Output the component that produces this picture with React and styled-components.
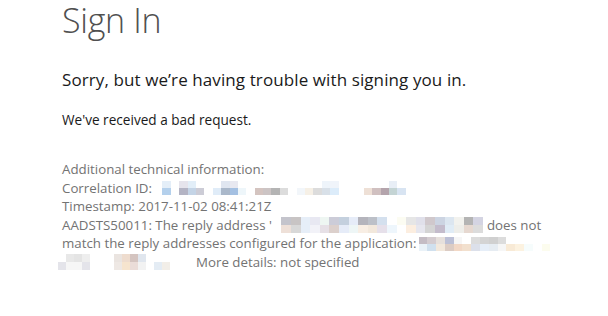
import React from 'react';
import styled, { createGlobalStyle } from 'styled-components';

const GlobalStyle = createGlobalStyle`
  html, body {
    margin: 0;
    padding: 0;
    background: #fff;
  }
  body {
    font-family: "Open Sans", "Noto Sans", sans-serif;
  }
`;

const Page = styled.div`
  padding: 0 0 0 62px;
  width: 608px;
  height: 316px;
  box-sizing: border-box;
  overflow: hidden;
`;

const Title = styled.h1`
  margin: 0;
  font-weight: 300;
  font-size: 34px;
  line-height: 40px;
  color: #505050;
  letter-spacing: -0.3px;
`;

const Lead = styled.p`
  margin: 28px 0 0;
  font-size: 17px;
  line-height: 24px;
  color: #1a1a1a;
  letter-spacing: 0.1px;
`;

const Message = styled.p`
  margin: 19px 0 0;
  font-size: 13.6px;
  line-height: 18px;
  color: #1a1a1a;
`;

const Details = styled.div`
  margin-top: 31px;
  font-size: 13.3px;
  line-height: 18.6px;
  color: #737373;
`;

const Line = styled.div`
  display: flex;
  align-items: center;
  white-space: nowrap;
`;

const Mosaic = styled.span`
  display: inline-grid;
  grid-template-columns: repeat(${(p) => p.cols}, ${(p) => p.cell}px);
  grid-auto-rows: ${(p) => p.rowH}px;
  margin: 0 ${(p) => p.gapRight || 0}px 0 ${(p) => p.gapLeft || 0}px;
`;

const Cell = styled.span`
  background: ${(p) => p.c};
`;

const W = '#ffffff';

const correlation = [
  [W, '#e4eef8', W, '#e6e4ec', '#e2eef8', W, W, W, '#e0e6f0', '#e8e8f0', W, W, W, W, W, W, W, W, W, W, '#eef4fa', '#f0f4fa', W, W, W, W, W, W, '#e8eef6', W],
  [W, '#b4d0ec', W, '#b4b4c4', '#c4d4e6', '#ccccd6', W, '#e0ecf8', '#aab8ca', '#a4c0e2', '#eef6fa', W, '#d4c4c0', '#ccc4c4', '#b4b4b4', '#dcdcdc', W, '#f2f6fa', '#f6f0e6', '#dcdcdc', '#d8e0e8', '#dcecfa', W, W, W, '#eee0d6', '#d0c0c0', '#b4a4ac', '#c4d4d4', '#d8e4f2'],
];

const reply = [
  [W, '#c4c4cc', '#c8c4c4', '#e6eef8', '#e8e8f2', '#eef6f2', '#ccccd8', '#c4d0de', '#e6ecf8', '#b4b4bc', '#bcc0c8', '#d4e0ee', W, '#fcfcf2', '#e6e6e6', '#e0e0ea', '#d0c8cc', '#ccd4e2', '#dce6f0', '#f2f2ee', '#b4b4b4', '#d4d4e2'],
  [W, '#eee0d8', '#d8d8d8', '#e6eef8', '#f2f2f8', '#e6e0e6', '#dcd0cc', '#e6ecf8', '#eef6f6', '#f8eee4', '#f2e8dc', '#e6e0ea', '#eef6fc', W, '#fceee0', '#e6e6ee', '#d4d4d4', '#c4bccc', '#e0ecf6', '#eeeeea', '#e6d8d0', '#dcdcdc'],
];

const application = [
  ['#c4bcc4', '#d4ccd0', '#e6e0dc', '#bcc0d6', '#f6f6f6', W, '#dcdcdc', '#d4d4d4', '#d0d0d0', '#dcdcdc', W, W, W, W, W, W],
  ['#eaf2f8', '#d0e0ee', '#f2e8dc', '#dcccc4', '#f2d8c6', '#f2e0ce', '#dce0ea', '#e6eef8', '#e6ecf2', '#f6f6f6', '#f8ead6', '#fcf2e0', '#f6fcfc', W, '#fcfcee', W],
];

const lastLine = [
  [W, '#e8e8e8', '#e4e4e4', '#eeeeee', W, W, W, '#eae4e0', '#eedcce', '#d4c4c0', '#e0e6ee', W, W, W, W, W],
  ['#e4e4ea', '#f6f6f6', '#f6f6f6', '#e4e4ea', W, W, W, '#eee8e4', '#f6e4ce', '#eadcd8', '#f2f2f2', W, '#e4ecf4', '#f2eee8', W, W],
];

function Pixelated({ data, cell = 8.4, rowH = 7, gapLeft, gapRight }) {
  const cols = data[0].length;
  return (
    <Mosaic cols={cols} cell={cell} rowH={rowH} gapLeft={gapLeft} gapRight={gapRight}>
      {data.flatMap((row, r) => row.map((c, i) => <Cell key={r + '-' + i} c={c} />))}
    </Mosaic>
  );
}

export default function App() {
  return (
    <>
      <GlobalStyle />
      <Page>
        <Title>Sign In</Title>
        <Lead>Sorry, but we’re having trouble with signing you in.</Lead>
        <Message>We've received a bad request.</Message>
        <Details>
          <Line>Additional technical information:</Line>
          <Line>
            Correlation ID:
            <Pixelated data={correlation} gapLeft={2} />
          </Line>
          <Line>Timestamp: 2017-11-02 08:41:21Z</Line>
          <Line>
            AADSTS50011: The reply address '
            <Pixelated data={reply} cell={9.6} rowH={8} gapRight={4} />
            does not
          </Line>
          <Line>
            match the reply addresses configured for the application:
            <Pixelated data={application} cell={8.8} rowH={7} gapLeft={2} />
          </Line>
          <Line>
            <Pixelated data={lastLine} cell={8} rowH={8} gapLeft={-4} gapRight={10} />
            More details: not specified
          </Line>
        </Details>
      </Page>
    </>
  );
}
